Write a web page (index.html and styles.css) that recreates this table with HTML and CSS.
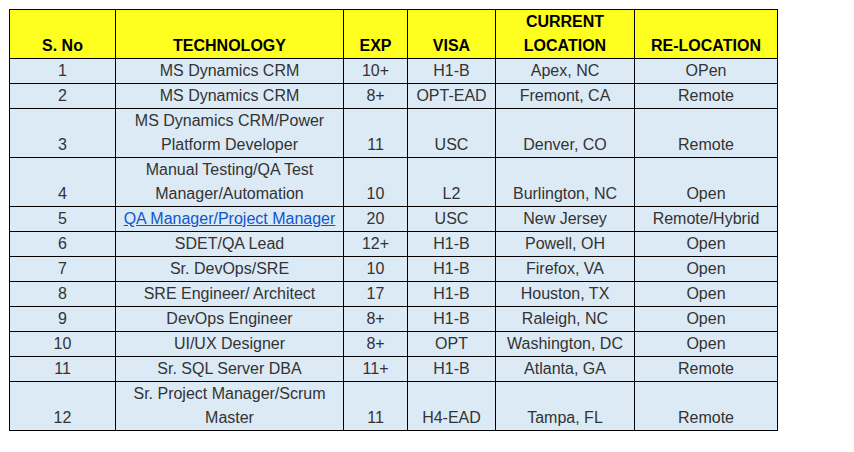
FILE: index.html
```html
<!DOCTYPE html>
<html>
<head>
<meta charset="utf-8">
<link rel="stylesheet" href="styles.css">
</head>
<body>
<table class="grid">
  <colgroup>
    <col class="c1"><col class="c2"><col class="c3"><col class="c4"><col class="c5"><col class="c6">
  </colgroup>
  <thead>
    <tr><th>S. No</th><th>TECHNOLOGY</th><th>EXP</th><th>VISA</th><th>CURRENT<br>LOCATION</th><th>RE-LOCATION</th></tr>
  </thead>
  <tbody>
    <tr><td>1</td><td>MS Dynamics CRM</td><td>10+</td><td>H1-B</td><td>Apex, NC</td><td>OPen</td></tr>
    <tr><td>2</td><td>MS Dynamics CRM</td><td>8+</td><td>OPT-EAD</td><td>Fremont, CA</td><td>Remote</td></tr>
    <tr><td>3</td><td>MS Dynamics CRM/Power<br>Platform Developer</td><td>11</td><td>USC</td><td>Denver, CO</td><td>Remote</td></tr>
    <tr><td>4</td><td>Manual Testing/QA Test<br>Manager/Automation</td><td>10</td><td>L2</td><td>Burlington, NC</td><td>Open</td></tr>
    <tr><td>5</td><td><a class="link" href="#">QA Manager/Project Manager</a></td><td>20</td><td>USC</td><td>New Jersey</td><td>Remote/Hybrid</td></tr>
    <tr><td>6</td><td>SDET/QA Lead</td><td>12+</td><td>H1-B</td><td>Powell, OH</td><td>Open</td></tr>
    <tr><td>7</td><td>Sr. DevOps/SRE</td><td>10</td><td>H1-B</td><td>Firefox, VA</td><td>Open</td></tr>
    <tr><td>8</td><td>SRE Engineer/ Architect</td><td>17</td><td>H1-B</td><td>Houston, TX</td><td>Open</td></tr>
    <tr><td>9</td><td>DevOps Engineer</td><td>8+</td><td>H1-B</td><td>Raleigh, NC</td><td>Open</td></tr>
    <tr><td>10</td><td>UI/UX Designer</td><td>8+</td><td>OPT</td><td>Washington, DC</td><td>Open</td></tr>
    <tr><td>11</td><td>Sr. SQL Server DBA</td><td>11+</td><td>H1-B</td><td>Atlanta, GA</td><td>Remote</td></tr>
    <tr><td>12</td><td>Sr. Project Manager/Scrum<br>Master</td><td>11</td><td>H4-EAD</td><td>Tampa, FL</td><td>Remote</td></tr>
  </tbody>
</table>
</body>
</html>
```
FILE: styles.css
```css
html, body {
  margin: 0;
  padding: 0;
  background: #ffffff;
}
body {
  padding: 9px 0 0 9px;
  font-family: "Liberation Sans", Arial, sans-serif;
  font-size: 16px;
}
.grid {
  border-collapse: collapse;
  table-layout: fixed;
  width: 768px;
}
.c1 { width: 106px; }
.c2 { width: 228px; }
.c3 { width: 64px; }
.c4 { width: 88px; }
.c5 { width: 139px; }
.c6 { width: 143px; }
.grid th, .grid td {
  border: 1px solid #000000;
  padding: 0 2px;
  line-height: 24px;
  text-align: center;
  vertical-align: bottom;
  white-space: nowrap;
  overflow: hidden;
}
.grid th {
  background: #ffff1f;
  color: #000000;
  font-weight: bold;
}
.grid td {
  background: #dceaf6;
  color: #333333;
}
.link {
  color: #1155cc;
  text-decoration: underline;
}
```
